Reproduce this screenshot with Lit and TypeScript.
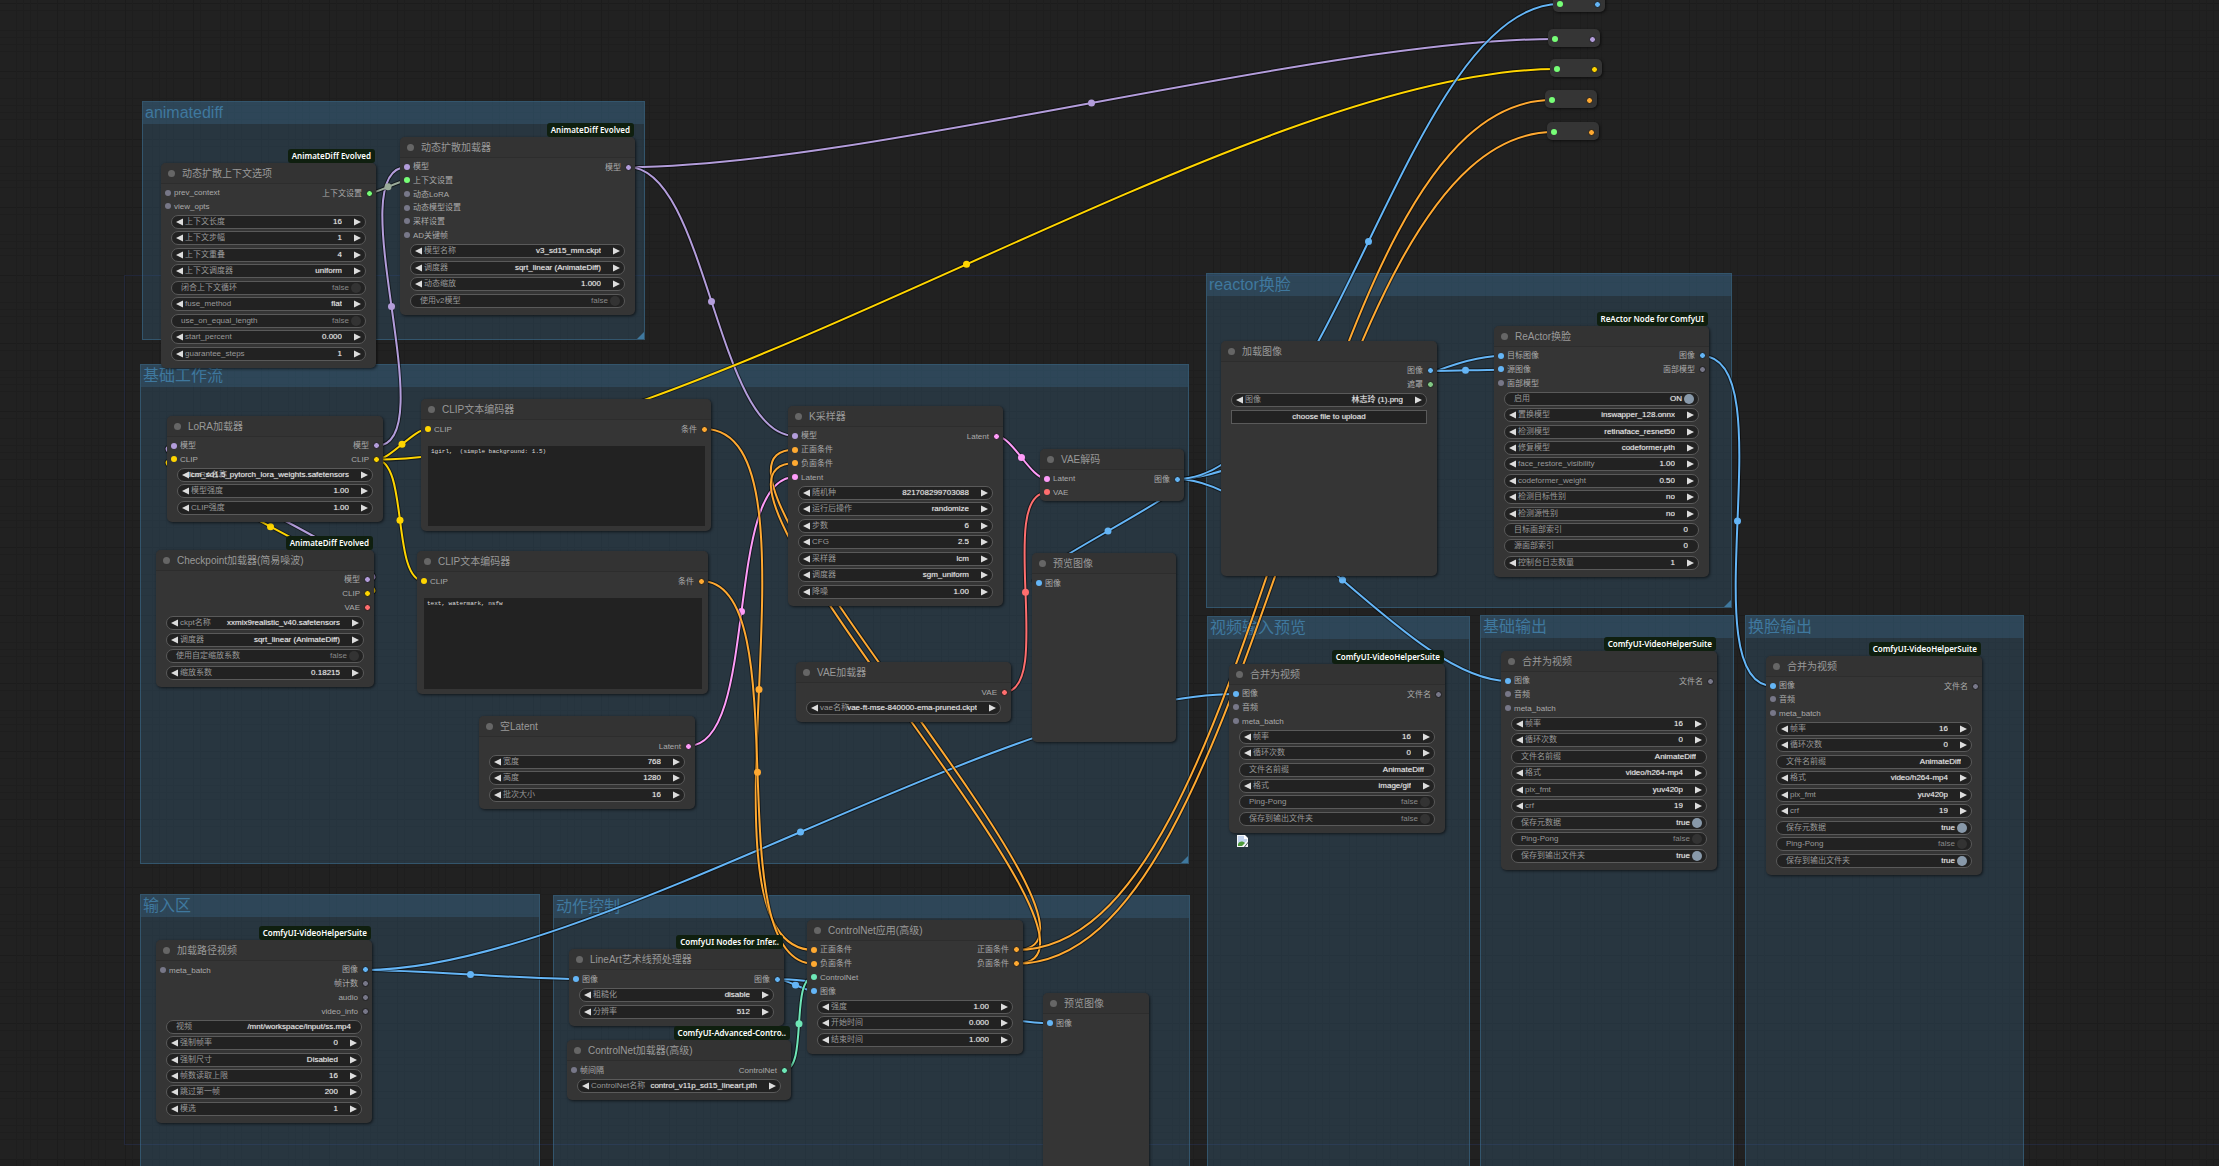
import { LitElement, html, svg, css, nothing } from "lit";
import { customElement, property } from "lit/decorators.js";

type Kind = "model" | "clip" | "cond" | "latent" | "image" | "vae" | "control" | "mask" | "context" | "any" | "link";

const COLORS: Record<Kind, string> = {
  model: "#b39ddb",
  clip: "#ffd500",
  cond: "#ffa931",
  latent: "#ff9cf9",
  image: "#64b5f6",
  vae: "#ff6e6e",
  control: "#6ee7b7",
  mask: "#81c784",
  context: "#77ff77",
  any: "#777788",
  link: "#99aa99",
};

interface Slot { label: string; kind: Kind; }
interface Widget {
  type: "combo" | "number" | "text" | "plain" | "toggle" | "button";
  label: string;
  value?: string;
  on?: boolean;
}
interface GraphNode {
  id: string;
  title: string;
  x: number;
  y: number;
  w: number;
  h?: number;
  badge?: string;
  inputs: Slot[];
  outputs: Slot[];
  widgets?: Widget[];
  text?: string;
}
interface Reroute { id: string; x: number; y: number; kind: Kind; }
interface Group { title: string; x: number; y: number; w: number; h: number; }
interface Link { from: string; out: number; to: string; in: number; kind: Kind; }

/* Canvas metrics: 20 and 24 graph units at the current zoom level. */
const ZOOM = 0.683;
const rowsHeight = (count: number, unit: number) => Math.round(count * unit * ZOOM);

const s = (label: string, kind: Kind = "any"): Slot => ({ label, kind });
const combo = (label: string, value: string): Widget => ({ type: "combo", label, value });
const num = (label: string, value: string): Widget => ({ type: "number", label, value });
const text = (label: string, value: string): Widget => ({ type: "text", label, value });
const plain = (label: string, value: string): Widget => ({ type: "plain", label, value });
const toggle = (label: string, value: string, on = false): Widget => ({ type: "toggle", label, value, on });

const GROUPS: Group[] = [
  { title: "animatediff", x: 142, y: 101, w: 503, h: 239 },
  { title: "基础工作流", x: 140, y: 364, w: 1049, h: 500 },
  { title: "输入区", x: 140, y: 894, w: 400, h: 420 },
  { title: "动作控制", x: 553, y: 895, w: 637, h: 420 },
  { title: "reactor换脸", x: 1206, y: 273, w: 526, h: 335 },
  { title: "视频输入预览", x: 1207, y: 616, w: 263, h: 700 },
  { title: "基础输出", x: 1480, y: 615, w: 254, h: 700 },
  { title: "换脸输出", x: 1745, y: 615, w: 279, h: 700 },
];

const VHS = "ComfyUI-VideoHelperSuite";
const combineInputs = () => [s("图像", "image"), s("音频"), s("meta_batch")];
const mp4Widgets = (): Widget[] => [
  num("帧率", "16"),
  num("循环次数", "0"),
  text("文件名前缀", "AnimateDiff"),
  combo("格式", "video/h264-mp4"),
  combo("pix_fmt", "yuv420p"),
  num("crf", "19"),
  toggle("保存元数据", "true", true),
  toggle("Ping-Pong", "false"),
  toggle("保存到输出文件夹", "true", true),
];

const NODES: GraphNode[] = [
  {
    id: "context", title: "动态扩散上下文选项", x: 161, y: 163, w: 215, badge: "AnimateDiff Evolved",
    inputs: [s("prev_context"), s("view_opts")],
    outputs: [s("上下文设置", "context")],
    widgets: [
      num("上下文长度", "16"), num("上下文步幅", "1"), num("上下文重叠", "4"), combo("上下文调度器", "uniform"),
      toggle("闭合上下文循环", "false"), combo("fuse_method", "flat"), toggle("use_on_equal_length", "false"),
      num("start_percent", "0.000"), num("guarantee_steps", "1"),
    ],
  },
  {
    id: "adloader", title: "动态扩散加载器", x: 400, y: 137, w: 235, badge: "AnimateDiff Evolved",
    inputs: [s("模型", "model"), s("上下文设置", "context"), s("动态LoRA"), s("动态模型设置"), s("采样设置"), s("AD关键帧")],
    outputs: [s("模型", "model")],
    widgets: [
      combo("模型名称", "v3_sd15_mm.ckpt"), combo("调度器", "sqrt_linear (AnimateDiff)"),
      num("动态缩放", "1.000"), toggle("使用v2模型", "false"),
    ],
  },
  {
    id: "lora", title: "LoRA加载器", x: 167, y: 416, w: 216,
    inputs: [s("模型", "model"), s("CLIP", "clip")],
    outputs: [s("模型", "model"), s("CLIP", "clip")],
    widgets: [
      combo("LoRA名称", "lcm_sd1.5_pytorch_lora_weights.safetensors"),
      num("模型强度", "1.00"), num("CLIP强度", "1.00"),
    ],
  },
  {
    id: "ckpt", title: "Checkpoint加载器(简易噪波)", x: 156, y: 550, w: 218, badge: "AnimateDiff Evolved",
    inputs: [],
    outputs: [s("模型", "model"), s("CLIP", "clip"), s("VAE", "vae")],
    widgets: [
      combo("ckpt名称", "xxmix9realistic_v40.safetensors"), combo("调度器", "sqrt_linear (AnimateDiff)"),
      toggle("使用自定缩放系数", "false"), num("缩放系数", "0.18215"),
    ],
  },
  {
    id: "clip1", title: "CLIP文本编码器", x: 421, y: 399, w: 290, h: 132,
    inputs: [s("CLIP", "clip")], outputs: [s("条件", "cond")],
    text: "1girl,  (simple background: 1.5)",
  },
  {
    id: "clip2", title: "CLIP文本编码器", x: 417, y: 551, w: 291, h: 143,
    inputs: [s("CLIP", "clip")], outputs: [s("条件", "cond")],
    text: "text, watermark, nsfw",
  },
  {
    id: "latent", title: "空Latent", x: 479, y: 716, w: 216,
    inputs: [], outputs: [s("Latent", "latent")],
    widgets: [num("宽度", "768"), num("高度", "1280"), num("批次大小", "16")],
  },
  {
    id: "ksampler", title: "K采样器", x: 788, y: 406, w: 215,
    inputs: [s("模型", "model"), s("正面条件", "cond"), s("负面条件", "cond"), s("Latent", "latent")],
    outputs: [s("Latent", "latent")],
    widgets: [
      num("随机种", "821708299703088"), combo("运行后操作", "randomize"), num("步数", "6"), num("CFG", "2.5"),
      combo("采样器", "lcm"), combo("调度器", "sgm_uniform"), num("降噪", "1.00"),
    ],
  },
  {
    id: "vaeloader", title: "VAE加载器", x: 796, y: 662, w: 215,
    inputs: [], outputs: [s("VAE", "vae")],
    widgets: [combo("vae名称", "vae-ft-mse-840000-ema-pruned.ckpt")],
  },
  {
    id: "decode", title: "VAE解码", x: 1040, y: 449, w: 144,
    inputs: [s("Latent", "latent"), s("VAE", "vae")], outputs: [s("图像", "image")],
  },
  {
    id: "preview1", title: "预览图像", x: 1032, y: 553, w: 144, h: 189,
    inputs: [s("图像", "image")], outputs: [],
  },
  {
    id: "loadvideo", title: "加载路径视频", x: 156, y: 940, w: 216, badge: VHS,
    inputs: [s("meta_batch")],
    outputs: [s("图像", "image"), s("帧计数"), s("audio"), s("video_info")],
    widgets: [
      text("视频", "/mnt/workspace/input/ss.mp4"), num("强制帧率", "0"), combo("强制尺寸", "Disabled"),
      num("帧数读取上限", "16"), num("跳过第一帧", "200"), num("模选", "1"),
    ],
  },
  {
    id: "lineart", title: "LineArt艺术线预处理器", x: 569, y: 949, w: 215, badge: "ComfyUI Nodes for Infer..",
    inputs: [s("图像", "image")], outputs: [s("图像", "image")],
    widgets: [combo("粗糙化", "disable"), num("分辨率", "512")],
  },
  {
    id: "cnloader", title: "ControlNet加载器(高级)", x: 567, y: 1040, w: 224, badge: "ComfyUI-Advanced-Contro..",
    inputs: [s("帧间隔")], outputs: [s("ControlNet", "control")],
    widgets: [combo("ControlNet名称", "control_v11p_sd15_lineart.pth")],
  },
  {
    id: "apply", title: "ControlNet应用(高级)", x: 807, y: 920, w: 216,
    inputs: [s("正面条件", "cond"), s("负面条件", "cond"), s("ControlNet", "control"), s("图像", "image")],
    outputs: [s("正面条件", "cond"), s("负面条件", "cond")],
    widgets: [num("强度", "1.00"), num("开始时间", "0.000"), num("结束时间", "1.000")],
  },
  {
    id: "preview2", title: "预览图像", x: 1043, y: 993, w: 106, h: 240,
    inputs: [s("图像", "image")], outputs: [],
  },
  {
    id: "loadimage", title: "加载图像", x: 1221, y: 341, w: 216, h: 235,
    inputs: [], outputs: [s("图像", "image"), s("遮罩", "mask")],
    widgets: [combo("图像", "林志玲 (1).png"), { type: "button", label: "choose file to upload" }],
  },
  {
    id: "reactor", title: "ReActor换脸", x: 1494, y: 326, w: 215, badge: "ReActor Node for ComfyUI",
    inputs: [s("目标图像", "image"), s("源图像", "image"), s("面部模型")],
    outputs: [s("图像", "image"), s("面部模型")],
    widgets: [
      toggle("启用", "ON", true), combo("置换模型", "inswapper_128.onnx"), combo("检测模型", "retinaface_resnet50"),
      combo("修复模型", "codeformer.pth"), num("face_restore_visibility", "1.00"), num("codeformer_weight", "0.50"),
      combo("检测目标性别", "no"), combo("检测源性别", "no"), plain("目标面部索引", "0"), plain("源面部索引", "0"),
      combo("控制台日志数量", "1"),
    ],
  },
  {
    id: "combine1", title: "合并为视频", x: 1229, y: 664, w: 216, badge: VHS,
    inputs: combineInputs(), outputs: [s("文件名")],
    widgets: [
      num("帧率", "16"), num("循环次数", "0"), text("文件名前缀", "AnimateDiff"), combo("格式", "image/gif"),
      toggle("Ping-Pong", "false"), toggle("保存到输出文件夹", "false"),
    ],
  },
  {
    id: "combine2", title: "合并为视频", x: 1501, y: 651, w: 216, badge: VHS,
    inputs: combineInputs(), outputs: [s("文件名")], widgets: mp4Widgets(),
  },
  {
    id: "combine3", title: "合并为视频", x: 1766, y: 656, w: 216, badge: VHS,
    inputs: combineInputs(), outputs: [s("文件名")], widgets: mp4Widgets(),
  },
];

const REROUTES: Reroute[] = [
  { id: "r1", x: 1553, y: -6, kind: "image" },
  { id: "r2", x: 1548, y: 29, kind: "model" },
  { id: "r3", x: 1550, y: 59, kind: "clip" },
  { id: "r4", x: 1545, y: 90, kind: "cond" },
  { id: "r5", x: 1547, y: 122, kind: "cond" },
];

const link = (from: string, out: number, to: string, input: number, kind: Kind): Link => ({ from, out, to, in: input, kind });

const LINKS: Link[] = [
  link("adloader", 0, "r2", 0, "model"),
  link("adloader", 0, "ksampler", 0, "model"),
  link("lora", 0, "adloader", 0, "model"),
  link("context", 0, "adloader", 1, "link"),
  link("ckpt", 0, "lora", 0, "model"),
  link("ckpt", 1, "lora", 1, "clip"),
  link("lora", 1, "clip1", 0, "clip"),
  link("lora", 1, "clip2", 0, "clip"),
  link("lora", 1, "r3", 0, "clip"),
  link("decode", 0, "preview1", 0, "image"),
  link("decode", 0, "reactor", 0, "image"),
  link("decode", 0, "combine2", 0, "image"),
  link("decode", 0, "r1", 0, "image"),
  link("loadimage", 0, "reactor", 1, "image"),
  link("reactor", 0, "combine3", 0, "image"),
  link("ksampler", 0, "decode", 0, "latent"),
  link("vaeloader", 0, "decode", 1, "vae"),
  link("latent", 0, "ksampler", 3, "latent"),
  link("loadvideo", 0, "lineart", 0, "image"),
  link("loadvideo", 0, "combine1", 0, "image"),
  link("lineart", 0, "apply", 3, "image"),
  link("lineart", 0, "preview2", 0, "image"),
  link("cnloader", 0, "apply", 2, "control"),
  link("clip1", 0, "apply", 0, "cond"),
  link("clip2", 0, "apply", 1, "cond"),
  link("apply", 0, "ksampler", 1, "cond"),
  link("apply", 1, "ksampler", 2, "cond"),
  link("apply", 0, "r4", 0, "cond"),
  link("apply", 1, "r5", 0, "cond"),
];

function anchor(id: string, index: number, side: "in" | "out"): [number, number] {
  const r = REROUTES.find((item) => item.id === id);
  if (r) return [r.x + (side === "in" ? 7 : 45), r.y + 10];
  const n = NODES.find((item) => item.id === id)!;
  return [side === "in" ? n.x + 7 : n.x + n.w - 7, n.y + 30 + index * 20 * ZOOM];
}

@customElement("graph-links")
export class GraphLinks extends LitElement {
  static styles = css`
    :host { display: block; }
    svg { display: block; width: 100%; height: 100%; overflow: visible; }
    .shade { fill: none; stroke: #000; stroke-opacity: 0.5; stroke-width: 4; }
    .wire { fill: none; stroke-width: 2; }
  `;

  render() {
    return html`<svg aria-hidden="true">
      ${LINKS.map((l) => {
        const [x1, y1] = anchor(l.from, l.out, "out");
        const [x2, y2] = anchor(l.to, l.in, "in");
        const bend = Math.hypot(x2 - x1, y2 - y1) / 4;
        const d = `M${x1} ${y1}C${x1 + bend} ${y1} ${x2 - bend} ${y2} ${x2} ${y2}`;
        const color = COLORS[l.kind];
        return svg`<path class="shade" d=${d} /><path class="wire" d=${d} stroke=${color} />
          <circle cx=${(x1 + x2) / 2} cy=${(y1 + y2) / 2} r="3.5" fill=${color} />`;
      })}
    </svg>`;
  }
}

@customElement("graph-widget")
export class GraphWidget extends LitElement {
  @property({ attribute: false }) widget!: Widget;

  static styles = css`
    :host { display: block; height: 14px; }
    * { box-sizing: border-box; }
    .pill {
      display: grid;
      grid-template-columns: 8px 1fr 8px;
      align-items: center;
      height: 14px;
      padding: 0 3px;
      border: 1px solid #5a5a5a;
      border-radius: 7px;
      background: #222;
      color: #999;
      font-size: 8px;
      line-height: 12px;
      white-space: nowrap;
    }
    .pill > * { grid-row: 1; }
    .name { grid-column: 2; padding-left: 2px; }
    .wide .name { grid-column: 1 / 3; padding-left: 6px; }
    .value {
      grid-column: 1 / 4;
      width: 100%;
      height: 12px;
      margin: 0;
      padding: 0 20px 0 0;
      border: 0;
      outline: 0;
      background: none;
      color: #e6e6e6;
      font: inherit;
      line-height: 12px;
      text-align: right;
      text-align-last: right;
      text-shadow: 0 0 1px rgba(221, 221, 221, 0.6);
      appearance: none;
    }
    .wide .value { padding-right: 7px; }
    .arrow {
      position: relative;
      width: 8px;
      height: 12px;
      margin: 0;
      padding: 0;
      border: 0;
      background: none;
    }
    .arrow svg { display: block; width: 8px; height: 12px; fill: #ddd; }
    .prev { grid-column: 1; }
    .next { grid-column: 3; }
    .switch { grid-template-columns: 1fr auto 9px; gap: 2px; padding: 0 5px 0 9px; }
    .switch .name { grid-column: 1; padding: 0; }
    .state { grid-column: 2; color: #888; }
    .on .state { color: #e6e6e6; text-shadow: 0 0 1px rgba(221, 221, 221, 0.6); }
    .knob {
      grid-column: 3;
      width: 10px;
      height: 10px;
      margin: 0;
      border-radius: 50%;
      background: #333;
      appearance: none;
    }
    .knob:checked { background: #8899aa; }
    .upload {
      display: block;
      width: 100%;
      height: 14px;
      margin: 0;
      padding: 0;
      border: 1px solid #5a5a5a;
      background: #222;
      color: #e6e6e6;
      font: inherit;
      font-size: 8px;
      line-height: 12px;
      text-align: center;
      text-shadow: 0 0 1px rgba(221, 221, 221, 0.6);
    }
  `;

  render() {
    const w = this.widget;
    if (w.type === "button") return html`<button class="upload" type="button">${w.label}</button>`;
    if (w.type === "toggle") {
      return html`<div class="pill switch ${w.on ? "on" : ""}">
        <label class="name" for="field">${w.label}</label>
        <span class="state">${w.value}</span>
        <input class="knob" id="field" type="checkbox" .checked=${!!w.on} />
      </div>`;
    }
    const wide = w.type === "text" || w.type === "plain";
    return html`<div class="pill ${wide ? "wide" : ""}">
      <label class="name" for="field">${w.label}</label>
      ${w.type === "combo"
        ? html`<select class="value" id="field"><option selected>${w.value}</option></select>`
        : html`<input class="value" id="field" type="text" .value=${w.value ?? ""} />`}
      ${wide
        ? nothing
        : html`<button class="arrow prev" type="button" aria-label="-"><svg viewBox="0 0 8 12"><path d="M8 2.6V9.4L1 6Z" /></svg></button>
            <button class="arrow next" type="button" aria-label="+"><svg viewBox="0 0 8 12"><path d="M0 2.6V9.4L7 6Z" /></svg></button>`}
    </div>`;
  }
}

@customElement("graph-node")
export class GraphNodeView extends LitElement {
  @property({ attribute: false }) node!: GraphNode;

  static styles = css`
    :host { display: block; }
    * { box-sizing: border-box; }
    .node {
      display: flex;
      flex-direction: column;
      height: 100%;
      border-radius: 5px;
      background: #353535;
      box-shadow: 1px 1px 3px rgba(0, 0, 0, 0.6);
    }
    .title {
      display: flex;
      flex: none;
      align-items: center;
      gap: 7px;
      height: 21px;
      margin: 0;
      padding: 1px 7px 0;
      border-bottom: 1px solid #2d2d2d;
      border-radius: 5px 5px 0 0;
      background: #333;
      color: #999;
      font-size: 10px;
      font-weight: 400;
      line-height: 20px;
      white-space: nowrap;
    }
    .title::before { content: ""; width: 7px; height: 7px; border-radius: 50%; background: #666; }
    .slots {
      display: flex;
      flex: none;
      justify-content: space-between;
      margin: 2px 0;
      padding: 0 4px;
    }
    .column { display: grid; grid-auto-rows: 1fr; margin: 0; padding: 0; list-style: none; }
    .slot {
      display: flex;
      align-items: center;
      gap: 3px;
      min-height: 0;
      color: #aaa;
      font-size: 8px;
      line-height: 13px;
      white-space: nowrap;
    }
    .dot { width: 6px; height: 6px; border-radius: 50%; }
    .out { justify-content: flex-end; gap: 4px; }
    .out .dot { border: 1px solid #1c1c1c; width: 7px; height: 7px; }
    .outputs { margin-right: -1px; }
    .widgets { display: grid; flex: none; grid-auto-rows: 1fr; padding: 0 10px; }
    .roomy { padding-bottom: 5px; }
    .prompt {
      flex: 1;
      min-height: 0;
      margin: 8px 6px 5px 7px;
      padding: 2px 3px;
      border: 0;
      outline: 0;
      resize: none;
      background: #222;
      color: #ddd;
      font: 6px/8px "Liberation Mono", "Noto Sans CJK SC", monospace;
    }
    .badge {
      position: absolute;
      right: 1px;
      bottom: 100%;
      height: 14px;
      padding: 0 4px;
      border-radius: 3px;
      background: #0f1f0f;
      color: #fff;
      font: 600 8px/13px "Noto Sans", "Open Sans", sans-serif;
      white-space: nowrap;
    }
  `;

  render() {
    const n = this.node;
    const widgets = n.widgets ?? [];
    const column = (slots: Slot[]) => `height:${rowsHeight(slots.length, 20)}px`;
    const rows = Math.max(n.inputs.length, n.outputs.length);
    return html`
      ${n.badge ? html`<span class="badge">${n.badge}</span>` : nothing}
      <article class="node">
        <h3 class="title">${n.title}</h3>
        <div class="slots" style="height:${rowsHeight(rows, 20)}px">
          <ul class="column" style=${column(n.inputs)}>
            ${n.inputs.map((i) => html`<li class="slot"><span class="dot" style="background:${COLORS[i.kind]}"></span>${i.label}</li>`)}
          </ul>
          <ul class="column outputs" style=${column(n.outputs)}>
            ${n.outputs.map((o) => html`<li class="slot out">${o.label}<span class="dot" style="background:${COLORS[o.kind]}"></span></li>`)}
          </ul>
        </div>
        ${widgets.length
          ? html`<div class="roomy"><div class="widgets" style="height:${rowsHeight(widgets.length, 24)}px">
              ${widgets.map((w) => html`<graph-widget .widget=${w}></graph-widget>`)}
            </div></div>`
          : nothing}
        ${n.text !== undefined ? html`<textarea class="prompt" aria-label=${n.title} .value=${n.text}></textarea>` : nothing}
      </article>
    `;
  }
}

@customElement("app-root")
export class AppRoot extends LitElement {
  static styles = css`
    :host { display: block; font-family: "Liberation Sans", "Noto Sans CJK SC", sans-serif; }
    * { box-sizing: border-box; }
    .canvas {
      position: relative;
      height: 100vh;
      overflow: hidden;
      background-color: #212121;
      background-image:
        linear-gradient(90deg, #1c1c1c 1px, transparent 1px 7px, #1e1e1e 7px 8px, transparent 8px 27px, #1e1e1e 27px 28px, transparent 28px 34px, #1e1e1e 34px 35px, transparent 35px 41px, #1e1e1e 41px 42px, transparent 42px 48px, #1e1e1e 48px 49px, transparent 49px),
        linear-gradient(#1c1c1c 1px, transparent 1px 7px, #1e1e1e 7px 8px, transparent 8px 27px, #1e1e1e 27px 28px, transparent 28px 34px, #1e1e1e 34px 35px, transparent 35px 41px, #1e1e1e 41px 42px, transparent 42px 48px, #1e1e1e 48px 49px, transparent 49px);
      background-size: 68px 68px;
      background-position: 57px 3px;
    }
    .frame {
      position: absolute;
      border: 1px solid rgba(42, 58, 110, 0.35);
    }
    .group {
      position: absolute;
      border: 1px solid rgba(63, 120, 158, 0.6);
      background: rgba(63, 120, 158, 0.25);
      background-clip: padding-box;
    }
    .group-title {
      height: 22px;
      margin: 0;
      padding-left: 2px;
      background: rgba(63, 120, 158, 0.25);
      color: #3f789e;
      font-size: 16px;
      font-weight: 400;
      line-height: 21px;
      white-space: nowrap;
    }
    .grip {
      position: absolute;
      right: 0;
      bottom: 0;
      width: 7px;
      height: 7px;
      fill: #3f789e;
    }
    .links { position: absolute; inset: 0; }
    .item { position: absolute; }
    .reroute {
      position: absolute;
      display: flex;
      align-items: center;
      justify-content: space-between;
      width: 52px;
      height: 18px;
      padding: 2px 4px 0;
      border-radius: 5px;
      background: #353535;
      box-shadow: 1px 1px 3px rgba(0, 0, 0, 0.6);
    }
    .dot { width: 6px; height: 6px; border-radius: 50%; background: #77ff77; }
    .end { width: 7px; height: 7px; border: 1px solid #1c1c1c; }
    .broken { position: absolute; width: 11px; height: 12px; }
  `;

  render() {
    return html`
      <main class="canvas">
        <div class="frame" style="left:124px;top:275px;width:2400px;height:870px"></div>
        ${GROUPS.map((g) => html`
          <section class="group" style="left:${g.x}px;top:${g.y}px;width:${g.w}px;height:${g.h}px">
            <h2 class="group-title">${g.title}</h2>
            <svg class="grip" viewBox="0 0 7 7" aria-hidden="true"><path d="M7 0V7H0Z" /></svg>
          </section>`)}
        <graph-links class="links"></graph-links>
        ${REROUTES.map((r) => html`
          <div class="reroute" style="left:${r.x}px;top:${r.y}px">
            <span class="dot"></span><span class="dot end" style="background:${COLORS[r.kind]}"></span>
          </div>`)}
        ${NODES.map((n) => html`
          <graph-node class="item" .node=${n}
            style="left:${n.x}px;top:${n.y}px;width:${n.w}px;${n.h ? `height:${n.h}px` : ""}"></graph-node>`)}
        <svg class="broken" style="left:1237px;top:835px" viewBox="0 0 11 12" role="img" aria-label="preview">
          <path d="M0 0H8L11 3V7L7 12H0Z" fill="#f4f6f8" />
          <path d="M1 1H7V4H10V6L4 11H1Z" fill="#c3d4ee" />
          <path d="M1 11V9C3 6 5 6 8 8L5 11Z" fill="#4e9a3b" />
          <path d="M7 0L11 4H7Z" fill="#fff" />
          <path d="M11 8V12H8Z" fill="#f4f6f8" />
        </svg>
      </main>
    `;
  }
}
